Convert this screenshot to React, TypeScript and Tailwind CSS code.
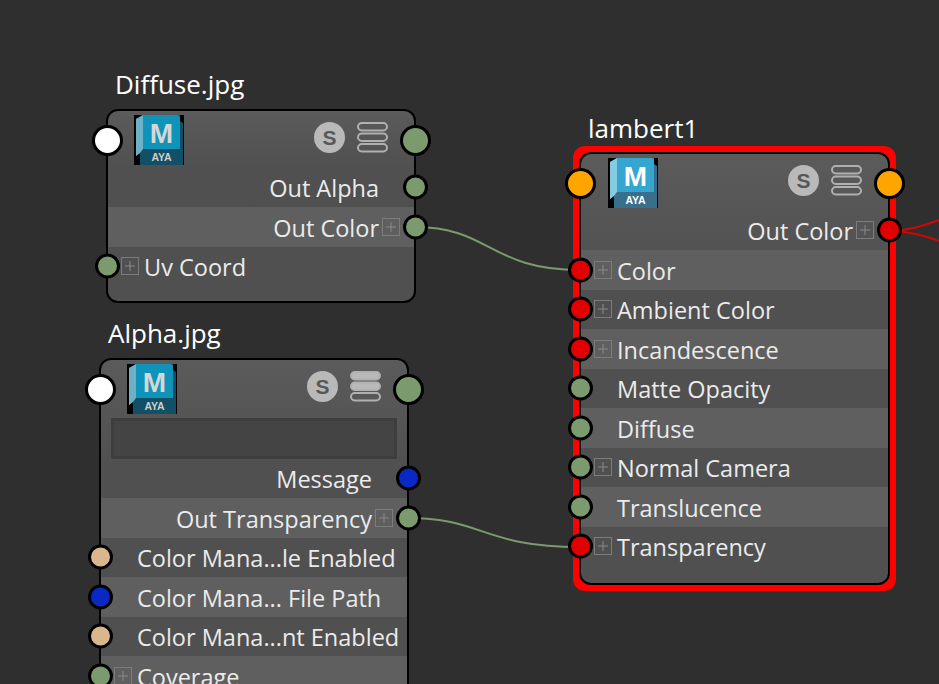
import React from 'react';

type Tone = 'green' | 'red' | 'blue' | 'tan' | 'none';

const PORT_COLORS: Record<Tone, string> = {
    green: 'bg-[#7b9a6d]',
    red: 'bg-[#e00000]',
    blue: 'bg-[#0a28c4]',
    tan: 'bg-[#dab68c]',
    none: '',
};

const FONT = 'font-["Open_Sans",sans-serif]';

const MayaIcon: React.FC<{ selected?: boolean }> = ({ selected }) => {
    const front = selected ? '#35a6cf' : '#1093b8';
    const side = selected ? '#85cbe1' : '#6cb1c8';
    const band = selected ? '#386f8b' : '#134f66';
    return (
        <svg width="50" height="50" viewBox="0 0 50 50" className={`shrink-0 ${selected ? 'ml-[1px]' : ''}`}>
            <rect width="50" height="50" fill="#000" />
            <path d="M9 0 L2 4 V41 L6 38 V50 H49 V8 L46 6 V0 Z" fill={band} />
            <path d="M9 0 L2 4 V41 L6 38 L9 34 Z" fill={side} />
            <path d="M9 0 H43 Q46 0 46 3 V34 H9 Z" fill={front} />
            <text x="27.5" y="28" textAnchor="middle" fontFamily="Liberation Sans, sans-serif" fontWeight="700" fontSize="28" fill={selected ? '#fff' : '#d6d6d6'}>M</text>
            <text x="27.5" y="46" textAnchor="middle" fontFamily="Liberation Sans, sans-serif" fontWeight="700" fontSize="10.5" fill={selected ? '#fff' : '#cfcfcf'}>AYA</text>
        </svg>
    );
};

const StackIcon: React.FC<{ filled?: number }> = ({ filled = 0 }) => (
    <svg width="31" height="31" viewBox="0 0 31 31" className="shrink-0">
        {[1, 11.5, 22].map((y, i) => (
            <rect key={y} x="1" y={y} width="29" height="7.5" rx="3.75" fill={i < filled ? '#b9b9b9' : 'none'} stroke="#b0b0b0" strokeWidth="2" />
        ))}
    </svg>
);

const PlusBox: React.FC = () => (
    <svg width="18" height="18" viewBox="0 0 18 18" className="shrink-0">
        <rect x="0.5" y="0.5" width="17" height="17" fill="none" stroke="#7c7c7c" />
        <path d="M9 4 V14 M4 9 H14" stroke="#8a8a8a" fill="none" />
    </svg>
);

const Port: React.FC<{ tone: Tone; side: 'left' | 'right' }> = ({ tone, side }) => (
    <div className={`absolute top-1/2 -translate-y-1/2 w-[25px] h-[25px] rounded-full border-[3px] border-black z-10 ${side === 'left' ? 'left-[-13.5px]' : 'right-[-13.5px]'} ${PORT_COLORS[tone]}`} />
);

const Row: React.FC<{
    label: string;
    tone: Tone;
    side: 'left' | 'right';
    plus?: boolean;
    light?: boolean;
}> = ({ label, tone, side, plus, light }) => (
    <div className={`relative h-[39.5px] flex items-center ${light ? 'bg-[#5f5f5f]' : ''} ${side === 'right' ? 'justify-end pr-[14px]' : 'pl-[13px]'}`}>
        {side === 'left' && <div className="w-[18px] mr-[5px] flex">{plus && <PlusBox />}</div>}
        <span className="pt-[3px] text-[23.5px] leading-none text-[#ebebeb] whitespace-nowrap">{label}</span>
        {side === 'right' && <div className="w-[18px] ml-[3px] flex">{plus && <PlusBox />}</div>}
        <Port tone={tone} side={side} />
    </div>
);

const NodeHeader: React.FC<{ selected?: boolean; leftColor: string; rightColor: string; filled?: number }> = ({ selected, leftColor, rightColor, filled }) => (
    <div className="relative h-[56.5px] flex justify-between pl-[26px] pr-[26px] pt-[4px]">
        <MayaIcon selected={selected} />
        <div className="flex gap-[12px] pt-[7px] h-[38px]">
            <div className="w-[31px] h-[31px] rounded-full bg-[#b9b9b9] flex items-center justify-center text-[21px] leading-none font-bold text-[#585858] font-['Liberation_Sans',sans-serif]">S</div>
            <StackIcon filled={filled} />
        </div>
        <div className={`absolute top-[13.5px] left-[-16.5px] w-[31px] h-[31px] rounded-full border-[3px] border-black z-10 ${leftColor}`} />
        <div className={`absolute top-[13.5px] right-[-16.5px] w-[31px] h-[31px] rounded-full border-[3px] border-black z-10 ${rightColor}`} />
    </div>
);

const NODE_BODY = 'bg-[#535353] bg-gradient-to-b from-[#5b5b5b] from-0% to-[#505050] to-30% border-2 border-black rounded-[12px]';

export default function App() {
    return (
        <div className={`relative w-[939px] h-[684px] overflow-hidden bg-[#2f2f2f] ${FONT}`}>
            <svg width="939" height="684" viewBox="0 0 939 684" className="absolute inset-0">
                <path d="M415 227 C490 227 490 270 580 270" fill="none" stroke="#7b9a6d" strokeWidth="2" />
                <path d="M408 518 C483 518 483 547 580 547" fill="none" stroke="#7b9a6d" strokeWidth="2" />
                <path d="M889 231 C910 231 925 225 939 220 M889 231 C910 231 925 236 939 241" fill="none" stroke="#e00000" strokeWidth="2" />
            </svg>

            {/* Diffuse.jpg */}
            <div className="absolute left-[106px] top-[66px] w-[310px]">
                <div className="h-[43px] pl-[9px] text-[26px] leading-[36px] text-white">Diffuse.jpg</div>
                <div className={`h-[194px] ${NODE_BODY}`}>
                    <NodeHeader leftColor="bg-white" rightColor="bg-[#7b9a6d]" />
                    <Row label="Out Alpha" tone="green" side="right" />
                    <Row label="Out Color" tone="green" side="right" plus light />
                    <Row label="Uv Coord" tone="green" side="left" plus />
                </div>
            </div>

            {/* Alpha.jpg */}
            <div className="absolute left-[99px] top-[315px] w-[310px]">
                <div className="h-[43px] pl-[9px] text-[26px] leading-[36px] text-white">Alpha.jpg</div>
                <div className={`h-[360px] ${NODE_BODY}`}>
                    <NodeHeader leftColor="bg-white" rightColor="bg-[#7b9a6d]" filled={2} />
                    <div className="h-[42px] px-[10px] pt-[1px]">
                        <div className="h-[41px] bg-[#444444] border-[3px] border-[#3e3e3e]" />
                    </div>
                    <Row label="Message" tone="blue" side="right" />
                    <Row label="Out Transparency" tone="green" side="right" plus light />
                    <Row label="Color Mana...le Enabled" tone="tan" side="left" />
                    <Row label="Color Mana... File Path" tone="blue" side="left" light />
                    <Row label="Color Mana...nt Enabled" tone="tan" side="left" />
                    <Row label="Coverage" tone="green" side="left" plus light />
                </div>
            </div>

            {/* lambert1 */}
            <div className="absolute left-[573px] top-[103px] w-[323px]">
                <div className="h-[43px] pl-[15px] text-[26px] leading-[50px] text-white">lambert1</div>
                <div className="h-[445px] border-[6px] border-[#ff0000] rounded-[12px] bg-[#ff0000]">
                    <div className={`h-full ${NODE_BODY} rounded-[10px]`}>
                        <NodeHeader selected leftColor="bg-[#ffa500]" rightColor="bg-[#ffa500]" />
                        <Row label="Out Color" tone="red" side="right" plus />
                        <Row label="Color" tone="red" side="left" plus light />
                        <Row label="Ambient Color" tone="red" side="left" plus />
                        <Row label="Incandescence" tone="red" side="left" plus light />
                        <Row label="Matte Opacity" tone="green" side="left" />
                        <Row label="Diffuse" tone="green" side="left" light />
                        <Row label="Normal Camera" tone="green" side="left" plus />
                        <Row label="Translucence" tone="green" side="left" light />
                        <Row label="Transparency" tone="red" side="left" plus />
                    </div>
                </div>
            </div>
        </div>
    );
}
